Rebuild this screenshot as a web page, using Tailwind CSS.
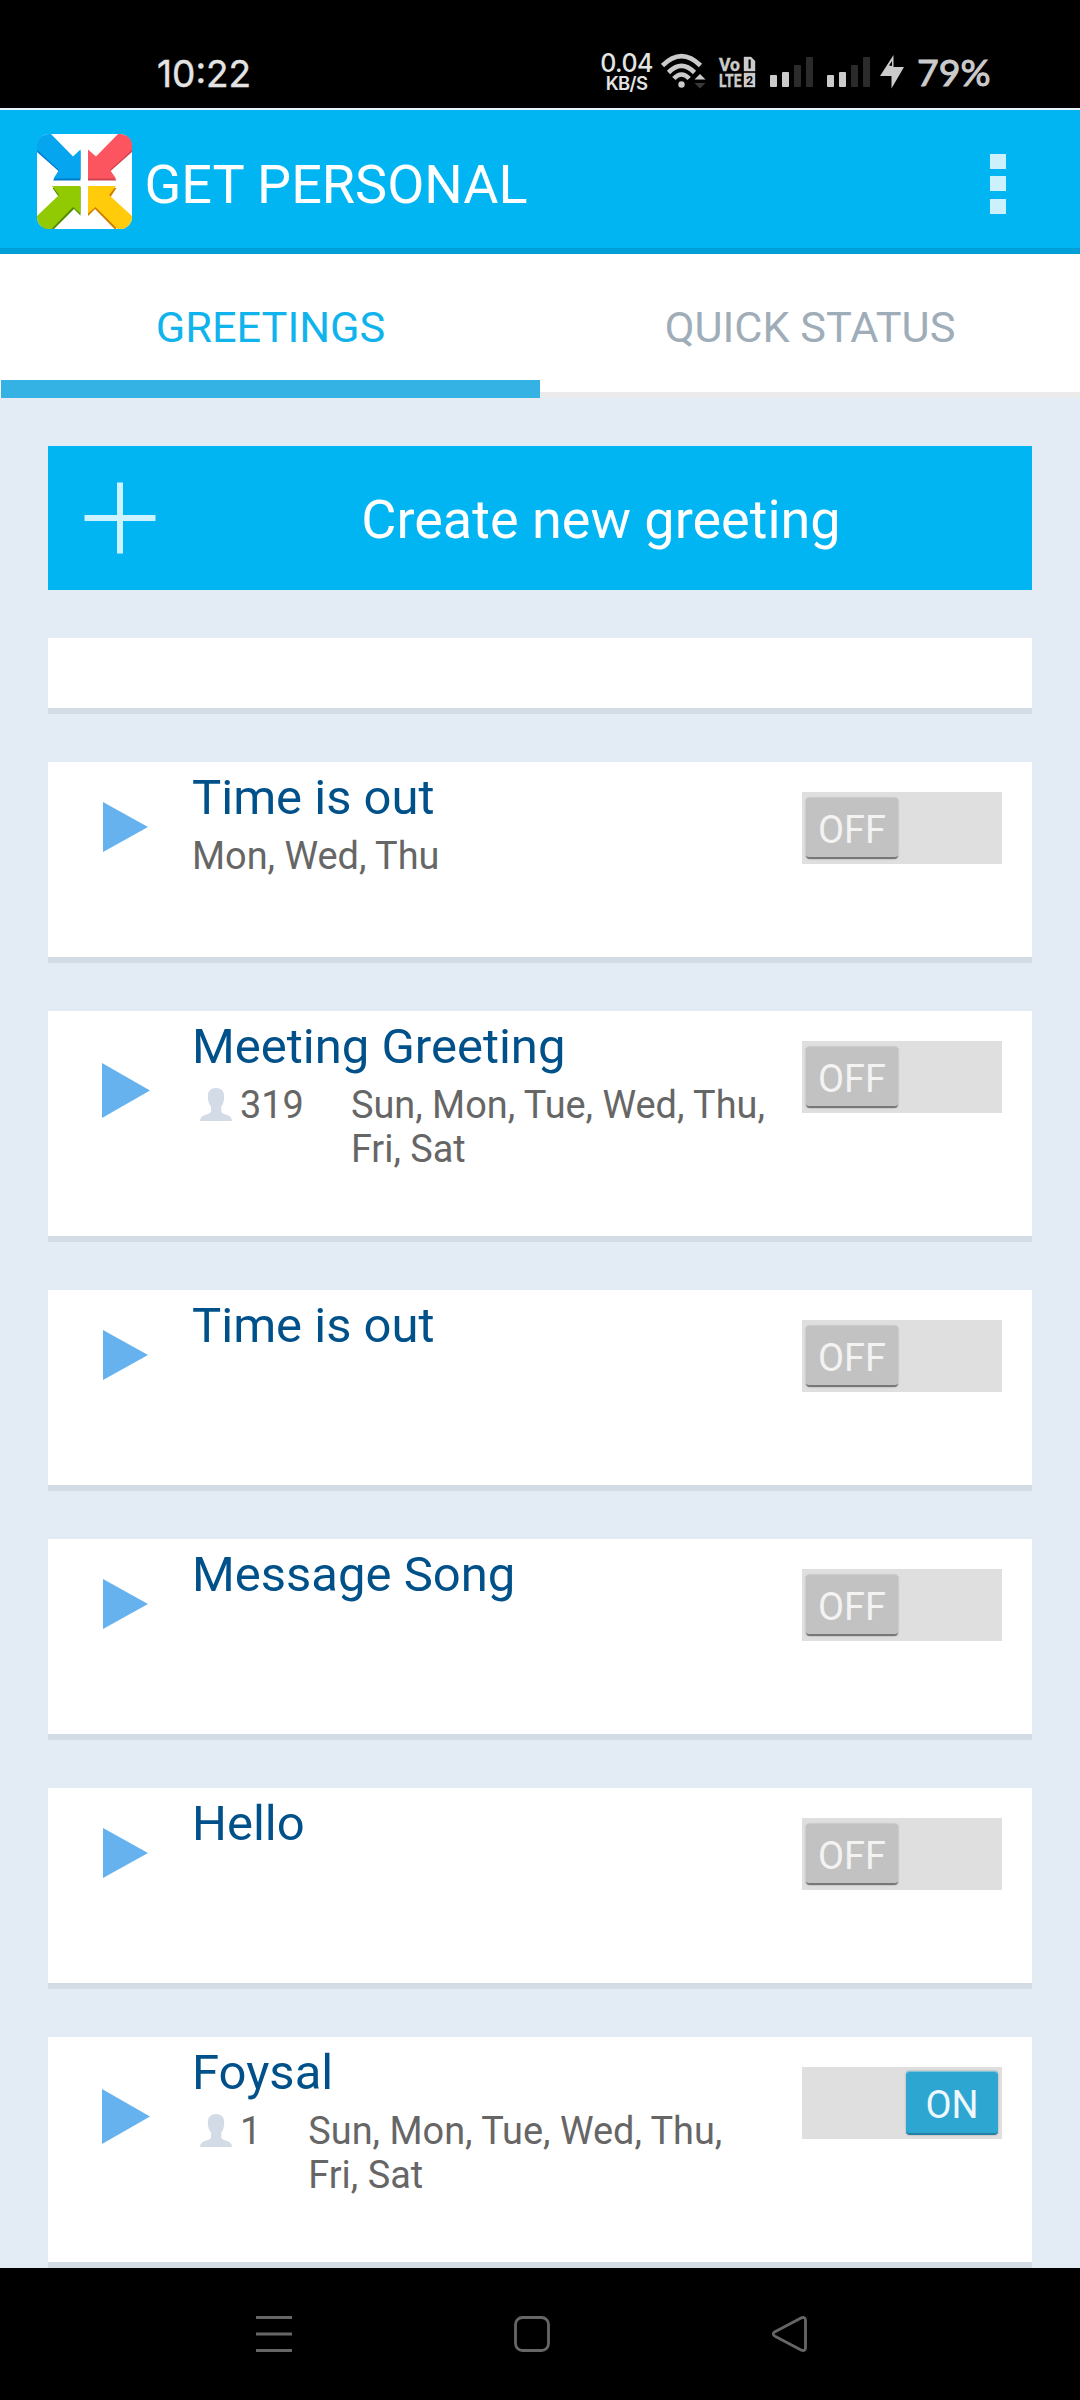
<!DOCTYPE html>
<html lang="en">
<head>
<meta charset="utf-8">
<title>Get Personal</title>
<script src="https://cdn.jsdelivr.net/npm/@tailwindcss/browser@4"></script>
</head>
<body class="bg-[#e3ebf5]">
<svg class="hidden">
  <defs>
    <symbol id="person" viewBox="0 0 32 33"><path fill="#d3dce6" d="M16 0c5 0 8.200 3 8.200 8 0 5-1 8-2.900 10.500V23c0 1.500 1 2.200 3 3C28 27.300 32 28.500 32 33H0c0-4.500 4-5.700 7.700-7 2-.8 3.300-1.500 3.300-3v-4.500C9 16 7.800 13 7.800 8 7.800 3 11 0 16 0z"/></symbol>
    <symbol id="play" viewBox="0 0 48 55" preserveAspectRatio="none"><path fill="#66b2ef" d="M0 0L48 27.500 0 55z"/></symbol>
  </defs>
</svg>
<div class="flex h-[2400px] w-[1080px] flex-col overflow-hidden font-['Roboto',sans-serif]">

  <!-- Status bar -->
  <div class="flex h-[108px] shrink-0 items-start bg-black pl-[157px] text-[#e4e4e4]">
    <div class="mt-[51px] w-[443px] font-['Inter',sans-serif] text-[37px] leading-[45px] [-webkit-text-stroke:0.4px]">10:22</div>
    <div class="mt-[53px] flex w-[53px] flex-col items-center whitespace-nowrap font-['Inter',sans-serif] font-medium">
      <span class="text-[25px] leading-[21px] tracking-[-0.6px]">0.04</span>
      <span class="text-[18.500px] leading-[18px] tracking-[-0.7px] font-semibold">KB/S</span>
    </div>
    <svg class="ml-2 mt-[52px] h-10 w-[46px]" viewBox="0 0 46 40" fill="none">
      <g stroke="#cbcbcb" stroke-width="4.600">
        <path d="M1.500 13.500Q20.500-5.500 39.500 13.500"/>
        <path d="M7.500 20.500Q20.500 7.500 33.500 20.500"/>
        <path d="M12.800 26.500Q20.500 18.500 28.200 26.500"/>
      </g>
      <circle cx="20.500" cy="32.500" r="3.200" fill="#cbcbcb"/>
      <path d="M39 22l5.500 5.500h-11z" fill="#cbcbcb"/><path d="M39 36.500l5.500-5.500h-11z" fill="#3a3a3a"/>
    </svg>
    <svg class="ml-3 mt-[56px] h-8 w-[37px] overflow-visible" viewBox="0 0 37 32">
      <g fill="#cbcbcb" stroke="#cbcbcb" stroke-width="0.400" font-family="Roboto, sans-serif" font-weight="700">
        <text x="0" y="14.500" font-size="18.500" textLength="21" lengthAdjust="spacingAndGlyphs">Vo</text>
        <text x="0" y="31" font-size="19" textLength="22.500" lengthAdjust="spacingAndGlyphs">LTE</text>
        <path d="M25 1h7l4 4v10H25zM25 17h11v14H25z"/>
      </g>
      <path d="M29.500 3.500h2.200v9h-2.200z"/>
      <text x="27" y="28.500" font-size="12.500" font-weight="700" font-family="Roboto, sans-serif">2</text>
    </svg>
    <svg class="ml-[14px] mt-[57px] h-[30px] w-[101px]" viewBox="0 0 101 30">
      <g fill="#cbcbcb"><rect y="18" width="7" height="12" rx="1"/><rect x="12" y="15" width="7" height="15" rx="1"/><rect x="57" y="18" width="7" height="12" rx="1"/><rect x="69" y="15" width="7" height="15" rx="1"/></g>
      <g fill="#2b2b2b"><rect x="24" y="8" width="7" height="22" rx="1"/><rect x="36" width="7" height="30" rx="1"/><rect x="81" y="8" width="7" height="22" rx="1"/><rect x="93" width="7" height="30" rx="1"/></g>
    </svg>
    <svg class="ml-[9px] mt-[55px] h-[34px] w-6" viewBox="0 0 24 34"><path fill="#cbcbcb" d="M13.500 0v12H24L11.500 33.500V21H0z"/><path d="M9 10.500l3-4.500v5z"/></svg>
    <div class="ml-[13px] mt-[50px] font-['Lato','Roboto',sans-serif] text-[37.500px] leading-[44px] text-[#cbcbcb] [-webkit-text-stroke:1px_#cbcbcb]">79%</div>
  </div>
  <div class="h-0.5 shrink-0 bg-[#e8f4fa]"></div>

  <!-- App bar -->
  <div class="flex h-36 shrink-0 items-center border-b-6 border-[#009fd8] bg-[#00b5f2] pl-[37px] pr-[74px] text-white">
    <svg class="mt-[5px] h-[95px] w-[95px] rounded-xl bg-white" viewBox="0 0 95 95">
      <path fill="#0078c8" d="M0 2h14l22 22 7.500-7v29.500H16l6-9L0 18z"/>
      <path fill="#05a5f0" d="M0 0h14l22 22.500 7.500-7V44.500H16.500l5.500-8.500L0 16z"/>
      <path fill="#cf4350" d="M95 2H81L59 24l-8-7v29.500h28.500l-6.500-9L95 18z"/>
      <path fill="#fd5560" d="M95 0H81L59 22.500l-8-7V44.500h28l-6-8.500L95 16z"/>
      <path fill="#4f8c00" d="M2 95h15l20-20 6.500 6.500V53l-28 1 6 8.500z"/>
      <path fill="#91c902" d="M0 95h14.500L36 73l7.500 6.500V52H15l7 9L0 82z"/>
      <path fill="#d07d00" d="M79.500 97L58 75l-7 7V54h28.500l-6 9z"/>
      <path fill="#ffcb0b" d="M95 95H80.500L58.500 73 51 79.500V52h28l-7 9 23 21z"/>
    </svg>
    <div class="ml-[12.500px] mt-[12px] text-[54px] leading-[64px]">GET PERSONAL</div>
    <div class="ml-auto mt-[9px] flex flex-col gap-[7.500px]">
      <div class="h-[15px] w-4 bg-[#ccf1fd]"></div><div class="h-[15px] w-4 bg-[#ccf1fd]"></div><div class="h-[15px] w-4 bg-[#ccf1fd]"></div>
    </div>
  </div>

  <!-- Tabs -->
  <div class="grid h-36 shrink-0 grid-cols-2 bg-white text-center text-[43.300px] leading-[50px]">
    <div class="ml-px flex flex-col justify-between border-b-18 border-[#33b2e3] pt-[49px] text-[#10b3ec]">GREETINGS</div>
    <div class="border-b-6 border-[#ebebeb] pt-[49px] text-[#9fadb9]">QUICK STATUS</div>
  </div>

  <!-- Greetings list -->
  <div class="flex flex-col gap-12 px-12 pt-12 text-[37.900px] leading-[44px] text-[#666]">
    <div class="flex h-36 items-center bg-[#00b5f2] text-[54px] text-white">
      <svg class="ml-9 h-[72px] w-[72px]" viewBox="0 0 72 72"><path d="M36 0.500v71M.5 36h71" stroke="#ccf3ff" stroke-width="6"/></svg>
      <div class="flex-1 pl-[14px] pt-1 text-center">Create new greeting</div>
    </div>

    <div class="h-[76px] border-b-6 border-[#d3dbe5] bg-white"></div>

    <div class="flex h-[201px] border-b-6 border-[#d3dbe5] bg-white">
      <svg class="ml-[55px] mt-10 h-[50px] w-[45px]"><use href="#play"/></svg>
      <div class="ml-11 flex-1 pt-[7px]"><div class="text-[49px] leading-[57px] text-[#00508a]">Time is out</div><div class="mt-2">Mon, Wed, Thu</div></div>
      <div class="mr-[30px] mt-[30px] h-[72px] w-[200px] bg-[#dfdfdf] pl-1 pt-1.5"><div class="h-[61px] w-[92px] rounded-[4px] border-b-2 border-[#777] bg-[#c2c2c2] pt-[10px] text-center text-[#f3f3f3] shadow-[0_0_2px_#999]">OFF</div></div>
    </div>

    <div class="flex h-[231px] border-b-6 border-[#d3dbe5] bg-white">
      <svg class="ml-[54px] mt-[52px] h-[55px] w-12"><use href="#play"/></svg>
      <div class="ml-[42px] flex-1 pt-[7px]"><div class="text-[49px] leading-[57px] text-[#00508a]">Meeting Greeting</div>
        <div class="mt-2 flex whitespace-nowrap"><svg class="ml-2 mt-[5px] h-[33px] w-8"><use href="#person"/></svg><div class="ml-2">319</div><div class="ml-[47px]">Sun, Mon, Tue, Wed, Thu,<br>Fri, Sat</div></div>
      </div>
      <div class="mr-[30px] mt-[30px] h-[72px] w-[200px] bg-[#dfdfdf] pl-1 pt-1.5"><div class="h-[61px] w-[92px] rounded-[4px] border-b-2 border-[#777] bg-[#c2c2c2] pt-[10px] text-center text-[#f3f3f3] shadow-[0_0_2px_#999]">OFF</div></div>
    </div>

    <div class="flex h-[201px] border-b-6 border-[#d3dbe5] bg-white">
      <svg class="ml-[55px] mt-10 h-[50px] w-[45px]"><use href="#play"/></svg>
      <div class="ml-11 flex-1 pt-[7px] text-[49px] leading-[57px] text-[#00508a]">Time is out</div>
      <div class="mr-[30px] mt-[30px] h-[72px] w-[200px] bg-[#dfdfdf] pl-1 pt-1.5"><div class="h-[61px] w-[92px] rounded-[4px] border-b-2 border-[#777] bg-[#c2c2c2] pt-[10px] text-center text-[#f3f3f3] shadow-[0_0_2px_#999]">OFF</div></div>
    </div>

    <div class="flex h-[201px] border-b-6 border-[#d3dbe5] bg-white">
      <svg class="ml-[55px] mt-10 h-[50px] w-[45px]"><use href="#play"/></svg>
      <div class="ml-11 flex-1 pt-[7px] text-[49px] leading-[57px] text-[#00508a]">Message Song</div>
      <div class="mr-[30px] mt-[30px] h-[72px] w-[200px] bg-[#dfdfdf] pl-1 pt-1.5"><div class="h-[61px] w-[92px] rounded-[4px] border-b-2 border-[#777] bg-[#c2c2c2] pt-[10px] text-center text-[#f3f3f3] shadow-[0_0_2px_#999]">OFF</div></div>
    </div>

    <div class="flex h-[201px] border-b-6 border-[#d3dbe5] bg-white">
      <svg class="ml-[55px] mt-10 h-[50px] w-[45px]"><use href="#play"/></svg>
      <div class="ml-11 flex-1 pt-[7px] text-[49px] leading-[57px] text-[#00508a]">Hello</div>
      <div class="mr-[30px] mt-[30px] h-[72px] w-[200px] bg-[#dfdfdf] pl-1 pt-1.5"><div class="h-[61px] w-[92px] rounded-[4px] border-b-2 border-[#777] bg-[#c2c2c2] pt-[10px] text-center text-[#f3f3f3] shadow-[0_0_2px_#999]">OFF</div></div>
    </div>

    <div class="flex h-[231px] border-b-6 border-[#d3dbe5] bg-white">
      <svg class="ml-[54px] mt-[52px] h-[55px] w-12"><use href="#play"/></svg>
      <div class="ml-[42px] flex-1 pt-[7px]"><div class="text-[49px] leading-[57px] text-[#00508a]">Foysal</div>
        <div class="mt-2 flex whitespace-nowrap"><svg class="ml-2 mt-[5px] h-[33px] w-8"><use href="#person"/></svg><div class="ml-2">1</div><div class="ml-[47px]">Sun, Mon, Tue, Wed, Thu,<br>Fri, Sat</div></div>
      </div>
      <div class="mr-[30px] mt-[30px] flex h-[72px] w-[200px] justify-end bg-[#dfdfdf] pr-1 pt-1"><div class="h-[64px] w-[92px] rounded-[4px] border-b-2 border-t border-b-[#267fa3] border-t-[#7cc3dd] bg-[#2ea6d2] pt-[11px] text-center text-[#eef8fc] shadow-[0_0_2px_#999]">ON</div></div>
    </div>
  </div>

  <!-- Navigation bar -->
  <div class="h-[132px] shrink-0 bg-black">
    <svg class="h-[132px] w-[1080px]" viewBox="0 0 1080 132" fill="none" stroke="#666" stroke-width="2.800" stroke-linejoin="round">
      <path d="M256 49.500h36M256 66h36M256 82.500h36"/>
      <rect x="515.500" y="49.500" width="33" height="33" rx="7"/>
      <path d="M801.500 49.800L775 63.800Q771.500 66 775 68.200L801.500 82.200Q805.500 83.500 805.500 79.500V52.500Q805.500 48.500 801.500 49.800z"/>
    </svg>
  </div>
</div>
</body>
</html>
